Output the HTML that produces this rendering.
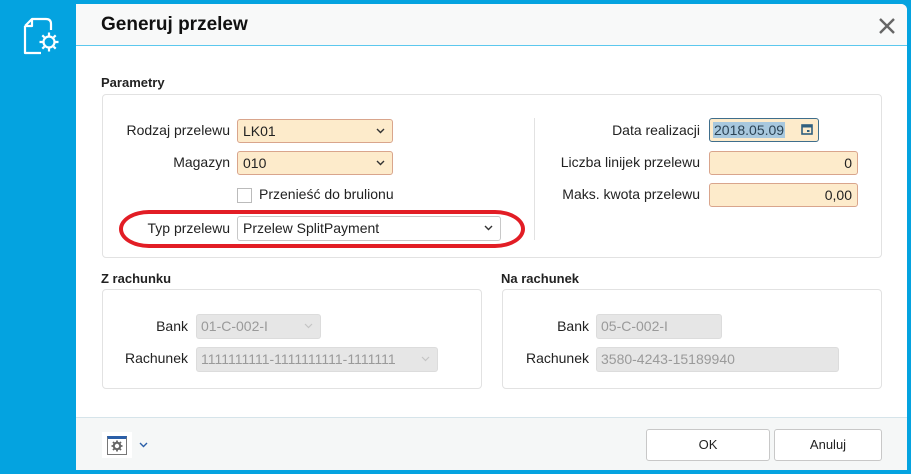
<!DOCTYPE html>
<html><head><meta charset="utf-8"><style>
*{box-sizing:border-box;margin:0;padding:0}
body{width:911px;height:474px;background:#04a3e0;position:relative;overflow:hidden;font-family:"Liberation Sans",sans-serif;font-size:13px;color:#222}
.a{position:absolute}
.dlg{left:76px;top:4px;width:831px;height:466px;background:#fff;border-radius:0 6px 0 0}
.hdr{left:76px;top:4px;width:831px;height:42px;background:#f8f9f9;border-bottom:1px solid #5cc8ee;border-radius:0 6px 0 0}
.ftr{left:76px;top:417px;width:831px;height:53px;background:#f5f7f7;border-top:1px solid #d6e4ea}
.box{border:1px solid #e2e2e2;border-radius:4px}
.lbl{text-align:right;width:200px;font-size:14px}
.in{border:1px solid #d9a58c;background:#fdebcb;border-radius:3px;font-size:14px;padding:3px 5px;line-height:16px}
.dis{background:#e6e6e6;border:1px solid #dcdcdc;color:#9a9a9a;border-radius:3px;font-size:14px;padding:3px 4px;line-height:16px}
.gh{font-weight:bold;font-size:13px}
.chev{position:absolute;right:7px;top:8px}
.btn{background:#fff;border:1px solid #c8c8c8;border-radius:3px;text-align:center;line-height:30px;font-size:13px}
</style></head><body>
<div class="a dlg"></div>
<div class="a hdr"></div>
<svg class="a" style="left:22px;top:16px" width="40" height="40" viewBox="0 0 40 40" fill="none" stroke="#fff" stroke-width="2.2" stroke-linejoin="round">
<path d="M3 10 L10 3 H24 Q29 3 29 8 V14 M3 10 V37 H19 M3 10 H10 V3"/>
<circle cx="27" cy="26" r="5.5"/>
<path d="M27 16.5v3M27 32.5v3M17.5 26h3M33.5 26h3M20.3 19.3l2.1 2.1M31.6 30.6l2.1 2.1M20.3 32.7l2.1-2.1M31.6 21.4l2.1-2.1"/>
</svg>
<div class="a" style="left:101px;top:14px;font-size:19px;font-weight:bold;color:#111">Generuj przelew</div>
<svg class="a" style="left:879px;top:18px" width="16" height="16" viewBox="0 0 16 16"><path d="M1 1L15 15M15 1L1 15" stroke="#666" stroke-width="2.4"/></svg>

<div class="a gh" style="left:101px;top:75px">Parametry</div>
<div class="a box" style="left:102px;top:94px;width:780px;height:164px"></div>
<div class="a lbl" style="left:30px;top:122px">Rodzaj przelewu</div>
<div class="a in" style="left:237px;top:119px;width:156px;height:24px">LK01<svg class="chev" width="9" height="6" viewBox="0 0 9 6"><path d="M1 1l3.5 3.5L8 1" stroke="#333" stroke-width="1.4" fill="none"/></svg></div>
<div class="a lbl" style="left:30px;top:154px">Magazyn</div>
<div class="a in" style="left:237px;top:151px;width:156px;height:24px">010<svg class="chev" width="9" height="6" viewBox="0 0 9 6"><path d="M1 1l3.5 3.5L8 1" stroke="#333" stroke-width="1.4" fill="none"/></svg></div>
<div class="a" style="left:237px;top:188px;width:15px;height:15px;border:1px solid #bbb;background:#fff"></div>
<div class="a" style="left:259px;top:186px;font-size:14px">Przenieść do brulionu</div>
<div class="a lbl" style="left:30px;top:220px">Typ przelewu</div>
<div class="a" style="left:237px;top:216px;width:264px;height:25px;border:1px solid #c8c8c8;border-radius:3px;background:#fff;font-size:14px;padding:3px 5px">Przelew SplitPayment<svg class="chev" width="9" height="6" viewBox="0 0 9 6"><path d="M1 1l3.5 3.5L8 1" stroke="#333" stroke-width="1.4" fill="none"/></svg></div>
<div class="a" style="left:119px;top:210px;width:406px;height:38px;border:4px solid #e21d25;border-radius:30px/19px"></div>
<div class="a" style="left:534px;top:118px;width:1px;height:122px;background:#e2e2e2"></div>
<div class="a lbl" style="left:500px;top:122px">Data realizacji</div>
<div class="a" style="left:709px;top:118px;width:110px;height:24px;border:1px solid #3f6e8c;background:#fdebcb;border-radius:3px"></div>
<div class="a" style="left:713px;top:122px;background:#a8c8de;color:#2b4355;font-size:14px;line-height:16px;padding:0 1px">2018.05.09</div>
<svg class="a" style="left:801px;top:123px" width="12" height="12" viewBox="0 0 12 12"><rect x="1" y="2" width="10" height="9" fill="none" stroke="#2f5f7f" stroke-width="1.6"/><rect x="1" y="2" width="10" height="2.5" fill="#2f5f7f"/><rect x="6" y="7" width="2.5" height="2" fill="#2f5f7f"/></svg>
<div class="a lbl" style="left:500px;top:154px">Liczba linijek przelewu</div>
<div class="a in" style="left:709px;top:151px;width:149px;height:24px;text-align:right">0</div>
<div class="a lbl" style="left:500px;top:186px">Maks. kwota przelewu</div>
<div class="a in" style="left:709px;top:183px;width:149px;height:24px;text-align:right">0,00</div>

<div class="a gh" style="left:101px;top:271px">Z rachunku</div>
<div class="a box" style="left:102px;top:289px;width:380px;height:100px"></div>
<div class="a lbl" style="left:-12px;top:318px">Bank</div>
<div class="a dis" style="left:196px;top:314px;width:125px;height:25px">01-C-002-I<svg class="chev" width="9" height="6" viewBox="0 0 9 6"><path d="M1 1l3.5 3.5L8 1" stroke="#c4c4c4" stroke-width="1.2" fill="none"/></svg></div>
<div class="a lbl" style="left:-12px;top:350px">Rachunek</div>
<div class="a dis" style="left:196px;top:347px;width:242px;height:25px">1111111111-1111111111-1111111<svg class="chev" width="9" height="6" viewBox="0 0 9 6"><path d="M1 1l3.5 3.5L8 1" stroke="#c4c4c4" stroke-width="1.2" fill="none"/></svg></div>

<div class="a gh" style="left:501px;top:271px">Na rachunek</div>
<div class="a box" style="left:502px;top:289px;width:380px;height:100px"></div>
<div class="a lbl" style="left:389px;top:318px">Bank</div>
<div class="a dis" style="left:596px;top:314px;width:126px;height:25px">05-C-002-I</div>
<div class="a lbl" style="left:389px;top:350px">Rachunek</div>
<div class="a dis" style="left:596px;top:347px;width:243px;height:25px">3580-4243-15189940</div>

<div class="a ftr"></div>
<div class="a" style="left:102px;top:432px;width:30px;height:26px;background:#fff"></div>
<div class="a" style="left:107px;top:436px;width:20px;height:19px;border:1px solid #777;border-top:3px solid #2b5fa8;background:#fff"></div>
<svg class="a" style="left:111px;top:440px" width="12" height="12" viewBox="0 0 12 12"><circle cx="6" cy="6" r="3.2" fill="none" stroke="#666" stroke-width="2"/><path d="M6 0.5v2M6 9.5v2M0.5 6h2M9.5 6h2M2 2l1.4 1.4M8.6 8.6L10 10M2 10l1.4-1.4M8.6 3.4L10 2" stroke="#666" stroke-width="1.8"/></svg>
<svg class="a" style="left:139px;top:442px" width="9" height="6" viewBox="0 0 9 6"><path d="M1 1l3.5 3.5L8 1" stroke="#2b5fa8" stroke-width="1.4" fill="none"/></svg>
<div class="a btn" style="left:646px;top:429px;width:124px;height:32px">OK</div>
<div class="a btn" style="left:774px;top:429px;width:108px;height:32px">Anuluj</div>
</body></html>
